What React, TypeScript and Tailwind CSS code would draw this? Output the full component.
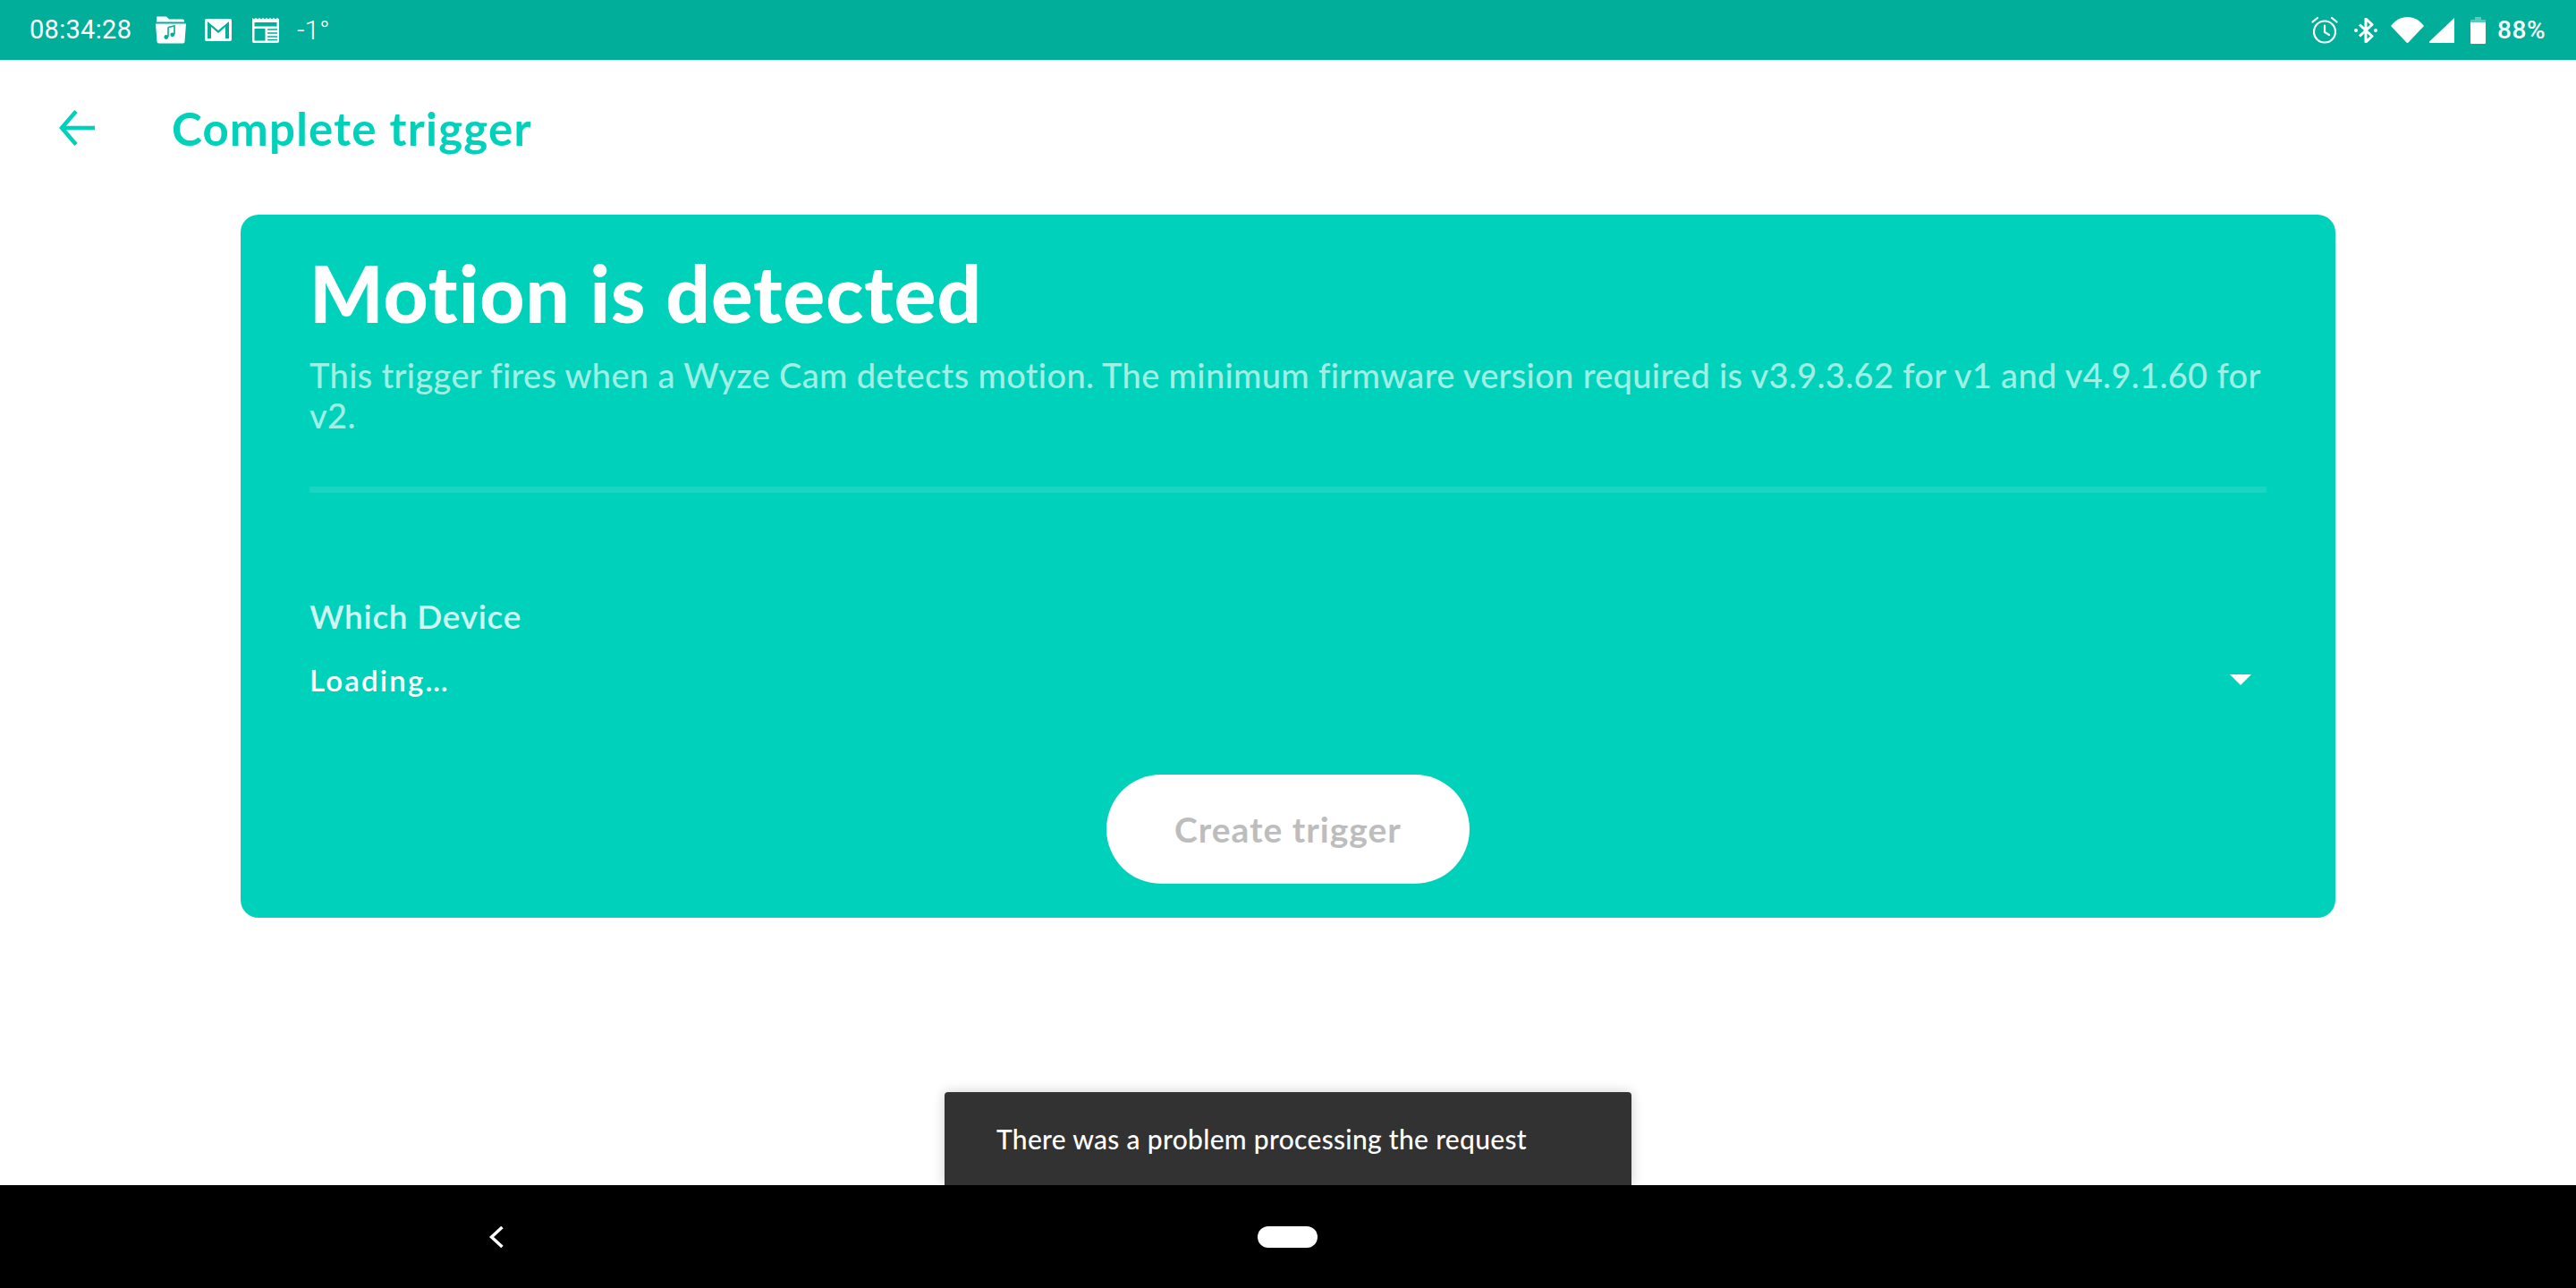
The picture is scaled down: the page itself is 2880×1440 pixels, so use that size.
import React from "react";

function Folder() {
  return (
    <svg width="36" height="31" viewBox="0 0 36 31" fill="none">
      <path d="M3 0.500h10l3 3h15a2 2 0 0 1 2 2v1H2V1.500a1 1 0 0 1 1-1z" fill="#fff" />
      <path d="M1 8.500h34l-1.500 20a2 2 0 0 1-2 2H4.500a2 2 0 0 1-2-2z" fill="#fff" />
      <path d="M15 12.500l7-1.500v9.500M15 12.500V23" stroke="#00AE9A" strokeWidth="1.600" />
      <circle cx="12.800" cy="23.500" r="2.400" fill="#00AE9A" />
      <circle cx="19.800" cy="20.800" r="2.400" fill="#00AE9A" />
    </svg>
  );
}

function Gmail() {
  return (
    <svg width="30" height="25" viewBox="0 0 30 25" fill="none">
      <rect x="0" y="0" width="30" height="25" rx="2" fill="#fff" />
      <path d="M3 22V3l12 10L27 3v19h-4V9l-8 7-8-7v13z" fill="#00AE9A" />
    </svg>
  );
}

function Calendar() {
  return (
    <svg width="30" height="28" viewBox="0 0 30 28" fill="none">
      <path d="M0 0l2 1.500L4 0l2 1.500L8 0l2 1.500L12 0l2 1.500L16 0l2 1.500L20 0l2 1.500L24 0l2 1.500L28 0l2 1.500V26a2 2 0 0 1-2 2H2a2 2 0 0 1-2-2z" fill="#fff" />
      <rect x="2.500" y="5" width="25" height="4.500" fill="#00AE9A" />
      <rect x="2.500" y="12" width="12" height="13.500" fill="#00AE9A" />
      <path d="M17 13h11M17 17h11M17 21h11M17 24.500h11" stroke="#00AE9A" strokeWidth="1.500" />
    </svg>
  );
}

function Alarm() {
  return (
    <svg width="30" height="31" viewBox="0 0 30 31" fill="none" stroke="#fff" strokeWidth="2.200" strokeLinecap="round">
      <circle cx="15" cy="17.500" r="12" />
      <path d="M15 10.500v7.500l5 3M1.500 6.500L7 2M28.500 6.500L23 2" />
    </svg>
  );
}

function Bluetooth() {
  return (
    <svg width="26" height="28" viewBox="0 0 26 28" fill="none">
      <path d="M6 7.500l14 13-7 6.500V1l7 6.500-14 13" stroke="#fff" strokeWidth="3" strokeLinejoin="round" />
      <circle cx="2" cy="14" r="2" fill="#fff" />
      <circle cx="24" cy="14" r="2" fill="#fff" />
    </svg>
  );
}

function Wifi() {
  return (
    <svg width="37" height="29" viewBox="0 0 37 29" fill="#fff">
      <path d="M0 10C5 3.500 11 0 18.500 0S32 3.500 37 10L19.500 28.500a1.400 1.400 0 0 1-2 0z" />
    </svg>
  );
}

function Signal() {
  return (
    <svg width="28" height="28" viewBox="0 0 28 28" fill="#fff">
      <path d="M28 0v27a1 1 0 0 1-1 1H1a1 1 0 0 1-.700-1.700z" />
    </svg>
  );
}

function Battery() {
  return (
    <svg width="17" height="30" viewBox="0 0 17 30" fill="#fff">
      <path d="M5 0h7v3h4a1 1 0 0 1 1 1v2H0V4a1 1 0 0 1 1-1h4z" opacity="0.35" />
      <path d="M0 6h17v23a1 1 0 0 1-1 1H1a1 1 0 0 1-1-1z" />
    </svg>
  );
}

function BackArrow() {
  return (
    <svg width="40" height="40" viewBox="0 0 40 40" fill="none" stroke="#00D1BB" strokeWidth="4.500">
      <path d="M40 20H3M19 1.500L3 20l16 18.500" />
    </svg>
  );
}

export default function App() {
  return (
    <div className="relative flex h-[1440px] w-[2880px] flex-col overflow-hidden bg-white font-['Lato',sans-serif]">
      <div className="flex h-[67px] shrink-0 items-center justify-between bg-[#00AE9A] pl-[33px] pr-[34px] font-['Roboto',sans-serif] text-white">
        <div className="flex items-center">
          <span className="w-[140px] text-[29px] tracking-[0.3px]">08:34:28</span>
          <Folder />
          <span className="ml-[20px]"><Gmail /></span>
          <span className="ml-[23px]"><Calendar /></span>
          <span className="ml-[20px] text-[30px] font-light">-1°</span>
        </div>
        <div className="flex items-center">
          <Alarm />
          <span className="ml-[18px]"><Bluetooth /></span>
          <span className="ml-[15px]"><Wifi /></span>
          <span className="ml-[6px]"><Signal /></span>
          <span className="ml-[18px]"><Battery /></span>
          <span className="ml-[13px] text-[28px] font-medium tracking-[0.5px]">88%</span>
        </div>
      </div>

      <div className="flex h-[173px] shrink-0 items-start pt-[56px]">
        <span className="ml-[66px]"><BackArrow /></span>
        <h1 className="ml-[86px] mt-[-7px] text-[51px] leading-[56px] font-bold tracking-[1.25px] text-[#00D1BB]">Complete trigger</h1>
      </div>

      <div className="mx-[269px] flex h-[786px] shrink-0 flex-col rounded-[20px] bg-[#00D1BB] px-[77px]">
        <h2 className="mt-[38px] text-[87px] leading-[100px] font-black tracking-[1px] text-white">Motion is detected</h2>
        <p className="mt-[19px] whitespace-nowrap text-[38px] leading-[45px] font-medium tracking-[0.33px] text-[#A0EFE4]">
          This trigger fires when a Wyze Cam detects motion. The minimum firmware version required is v3.9.3.62 for v1 and v4.9.1.60 for
          <br />
          v2.
        </p>
        <div className="mt-[57px] h-[7px] bg-[#19D6C3]" />
        <div className="mt-[116px] text-[37px] leading-[44px] font-semibold tracking-[0.7px] text-[#CFF6F1]">Which Device</div>
        <div className="mt-[29px] flex items-center justify-between">
          <span className="text-[33px] leading-[40px] font-semibold tracking-[2.2px] text-white">Loading…</span>
          <span className="mr-[17px] h-0 w-0 border-x-[12px] border-t-[12px] border-x-transparent border-t-white" />
        </div>
        <button className="mx-auto mt-[86px] flex h-[122px] w-[406px] shrink-0 items-center justify-center rounded-full bg-white text-[39px] font-bold tracking-[1px] text-[#BDBDBD]">
          Create trigger
        </button>
      </div>

      <div className="flex-1" />

      <div className="flex h-[115px] shrink-0 items-center bg-black">
        <svg className="ml-[547px]" width="16" height="24" viewBox="0 0 16 24" fill="none" stroke="#fff" strokeWidth="3.500">
          <path d="M14.500 1L2.500 12l12 11" />
        </svg>
        <div className="ml-[843px] h-[24px] w-[67px] rounded-[12px] bg-white" />
      </div>

      <div className="absolute left-[1056px] top-[1221px] flex h-[104px] w-[768px] items-center rounded-t-[4px] bg-[#323232] pl-[58px] text-[30px] font-medium tracking-[0.3px] text-white shadow-[0_0_14px_rgba(0,0,0,0.2)]">
        There was a problem processing the request
      </div>
    </div>
  );
}
